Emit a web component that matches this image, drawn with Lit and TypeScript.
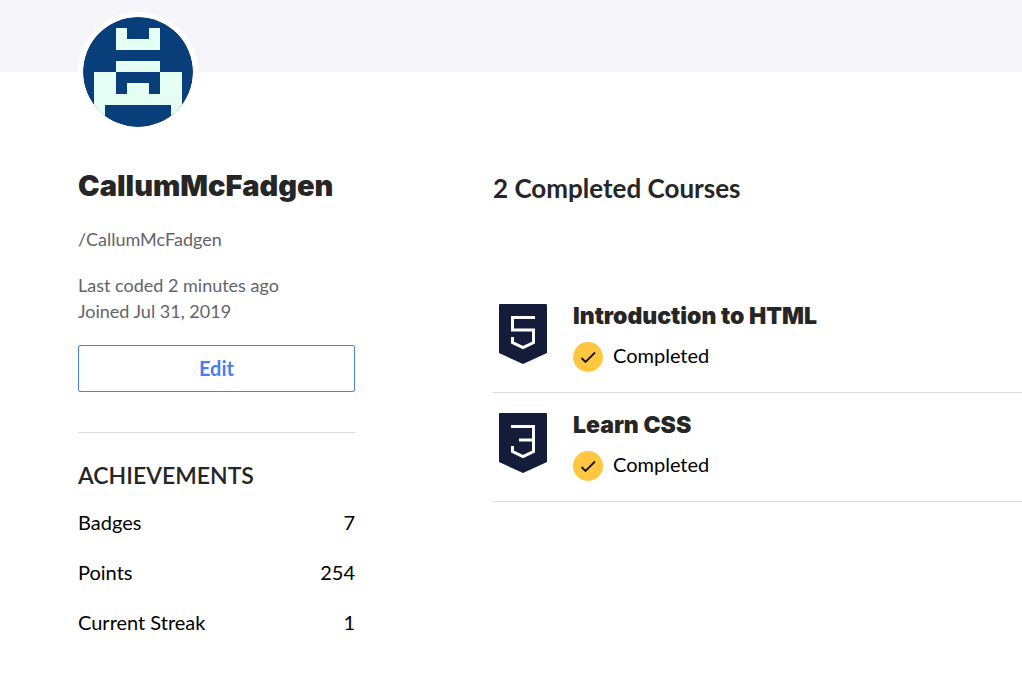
import { LitElement, html, css, svg } from "lit";
import { customElement } from "lit/decorators.js";

interface Course {
  title: string;
  glyph: string;
}

const COURSES: Course[] = [
  {
    title: "Introduction to HTML",
    glyph: "M36 13.5H13.5V26H34.5V38.5L24 43.7 13.5 38.5V33",
  },
  {
    title: "Learn CSS",
    glyph: "M12 13.5H34.5V38.5L24 43.7 13.5 38.5V33M20 27H34.5",
  },
];

const ACHIEVEMENTS: [string, number][] = [
  ["Badges", 7],
  ["Points", 254],
  ["Current Streak", 1],
];

@customElement("app-root")
export class AppRoot extends LitElement {
  static styles = css`
    :host {
      display: block;
      min-height: 100vh;
      overflow-x: hidden;
      background: #fff;
      color: #000;
      font: 400 20px/30px Lato, "Noto Sans", sans-serif;
    }
    * {
      box-sizing: border-box;
    }
    h1, h2, h3, p, ul, dl, dd {
      margin: 0;
      padding: 0;
    }
    .banner {
      height: 72px;
      background: #f5f5fa;
    }
    .page {
      display: grid;
      grid-template-columns: 277px minmax(0, 1fr);
      column-gap: 138px;
      padding-left: 78px;
    }
    .avatar {
      display: block;
      width: 120px;
      height: 120px;
      margin: -60px 0 0;
      border: 5px solid #fff;
      border-radius: 50%;
      background: #fff;
    }
    .name {
      margin-top: 33px;
      color: #262626;
      font: 900 29px/42px Inter, sans-serif;
    }
    .handle, .activity {
      color: #646466;
      font-size: 18px;
      line-height: 26px;
    }
    .handle {
      margin-top: 19px;
    }
    .activity {
      margin-top: 20px;
    }
    .edit {
      display: block;
      width: 100%;
      height: 47px;
      margin-top: 21px;
      padding: 0 0 2px;
      border: 1px solid #4b7ef0;
      border-radius: 2px;
      background: #fff;
      color: #4b7ef0;
      font: inherit;
      font-weight: 700;
      cursor: pointer;
    }
    .achievements {
      margin-top: 40px;
      padding-top: 26px;
      border-top: 1px solid #dcdce0;
    }
    .section-title {
      color: #262626;
      font-size: 23px;
      font-weight: 600;
      line-height: 32px;
    }
    .stats {
      display: grid;
      gap: 20px;
      margin-top: 16px;
    }
    .stat {
      display: flex;
      justify-content: space-between;
    }
    .courses {
      padding-top: 100px;
    }
    .courses-title {
      color: #262626;
      font-size: 26px;
      font-weight: 700;
      line-height: 32px;
    }
    .list {
      margin-top: 80px;
      list-style: none;
    }
    .course {
      display: flex;
      gap: 26px;
      padding: 20px 6px;
      border-bottom: 1px solid #dcdce0;
    }
    .badge {
      flex: none;
      width: 48px;
      height: 60px;
    }
    .course-title {
      color: #262626;
      font: 900 23px/24px Inter, sans-serif;
    }
    .status {
      display: flex;
      gap: 10px;
      margin-top: 14px;
      line-height: 26px;
    }
    .check {
      width: 30px;
      height: 30px;
    }
  `;

  private courseRow(course: Course) {
    return html`
      <li class="course">
        <svg class="badge" viewBox="0 0 48 60" aria-hidden="true">
          <path d="M1 0H47Q48 0 48 1V49L24 60 0 49V1Q0 0 1 0Z" fill="#141c3a" />
          ${svg`<path d=${course.glyph} fill="none" stroke="#fff" stroke-width="3" />`}
        </svg>
        <div>
          <h3 class="course-title">${course.title}</h3>
          <p class="status">
            <svg class="check" viewBox="0 0 30 30" aria-hidden="true">
              <circle cx="15" cy="15" r="15" fill="#ffc740" />
              <path d="M8.5 16 12.5 20 22 10.5" fill="none" stroke="#141414" stroke-width="1.8" />
            </svg>
            Completed
          </p>
        </div>
      </li>
    `;
  }

  render() {
    return html`
      <header class="banner"></header>
      <main class="page">
        <aside>
          <svg class="avatar" viewBox="0 0 10 10" role="img" aria-label="Avatar">
            <clipPath id="disc"><circle cx="5" cy="5" r="5" /></clipPath>
            <g clip-path="url(#disc)">
              <path fill="#083e7a" d="M0 0h10v10H0z" />
              <path
                fill="#e6fff4"
                d="M3 1h1v1h2V1h1v2H3zM3 4h4v1H3zM1 5h2v2h1V6h2v1h1V5h2v5H8V8H2v2H1z"
              />
            </g>
          </svg>
          <h1 class="name">CallumMcFadgen</h1>
          <p class="handle">/CallumMcFadgen</p>
          <p class="activity">Last coded 2 minutes ago<br />Joined Jul 31, 2019</p>
          <button class="edit" type="button">Edit</button>
          <section class="achievements">
            <h2 class="section-title">ACHIEVEMENTS</h2>
            <dl class="stats">
              ${ACHIEVEMENTS.map(
                ([label, value]) => html`
                  <div class="stat"><dt>${label}</dt><dd>${value}</dd></div>
                `
              )}
            </dl>
          </section>
        </aside>
        <section class="courses">
          <h2 class="courses-title">2 Completed Courses</h2>
          <ul class="list">${COURSES.map((c) => this.courseRow(c))}</ul>
        </section>
      </main>
    `;
  }
}
